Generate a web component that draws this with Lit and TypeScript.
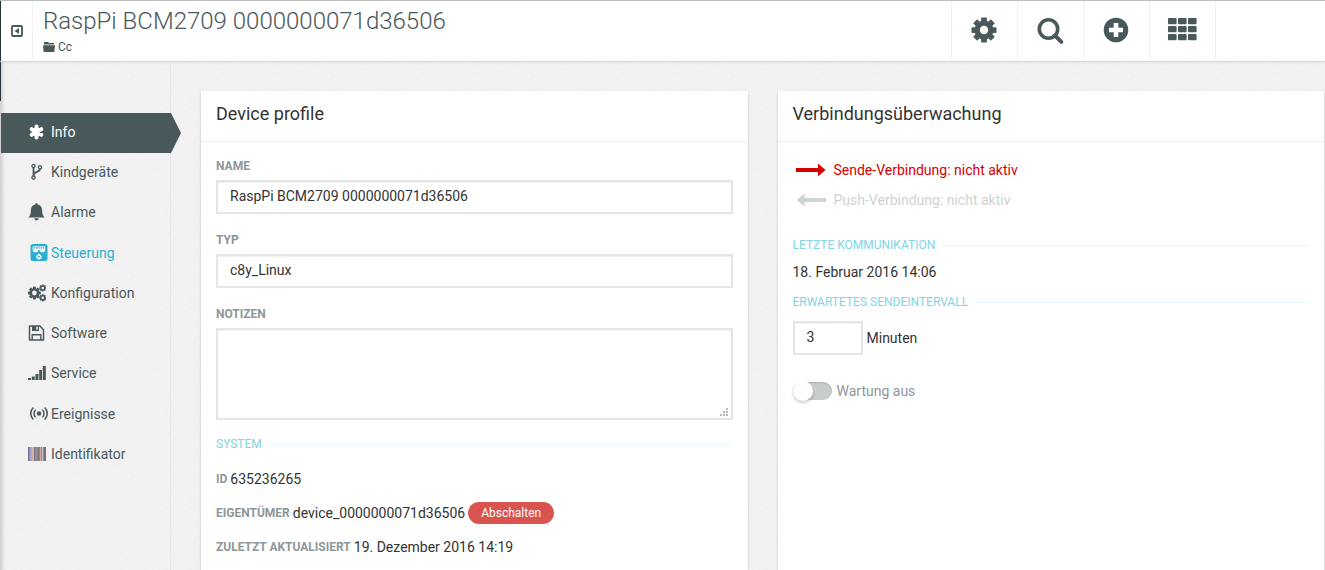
import { LitElement, html, css, svg, type SVGTemplateResult } from "lit";
import { customElement } from "lit/decorators.js";
import { classMap } from "lit/directives/class-map.js";

const gear = (cx: number, cy: number, r: number, hole: number): SVGTemplateResult => {
  const body = r * 0.76;
  const tooth = r * 0.46;
  return svg`
    <circle cx=${cx} cy=${cy} r=${(body + hole) / 2} fill="none" stroke="currentColor" stroke-width=${body - hole} />
    ${[0, 45, 90, 135, 180, 225, 270, 315].map(
      (a) => svg`<rect x=${cx - tooth / 2} y=${cy - r} width=${tooth} height=${r * 0.4} rx=${r * 0.06}
        transform="rotate(${a} ${cx} ${cy})" fill="currentColor" />`,
    )}`;
};

const icons: Record<string, SVGTemplateResult> = {
  info: svg`<g stroke="currentColor" stroke-width="4" stroke-linecap="round">
    <path d="M8.500 3.500v11M3.700 6.200l9.600 5.600M13.300 6.200l-9.600 5.600" /></g>`,
  children: svg`<g fill="none" stroke="currentColor" stroke-width="1.300">
    <circle cx="5.500" cy="3" r="1.600" /><circle cx="12" cy="4.200" r="1.600" /><circle cx="5.500" cy="14.600" r="1.600" />
    <path d="M5.500 4.700v8.200M12 5.900c0 3.500-6.300 2.500-6.300 6" stroke-width="1.800" /></g>`,
  alarms: svg`<path fill="currentColor" d="M8.500.3c.8 0 1.300.5 1.300 1.300 3 .7 4.200 2.800 4.300 5.600.1 3.700.9 5.400 2.600 7.300H.5c1.700-1.900 2.300-3.600 2.400-7.300.1-2.800 1.300-4.900 4.300-5.600C7.200.8 7.700.3 8.500.3zM6.200 15.200h4.600c-.2 1.400-1 2.100-2.300 2.100s-2.100-.7-2.300-2.100z" />`,
  control: svg`<rect x=".5" y="0" width="17" height="17" rx="2.500" fill="currentColor" />
    <path d="M3 2.200h12c.7 1.800.4 4.300-.6 6H3.600c-1-1.700-1.300-4.200-.6-6z" fill="#f1f1f1" />
    <path d="M4 3.900h10" stroke="currentColor" stroke-width="1.100" stroke-dasharray="1.300 .9" />
    <path d="M9 5.500l2.200 3.500H6.800z" fill="currentColor" /><path d="M9 9.200l2 2a2.600 2.600 0 1 1-4 0z" fill="#f1f1f1" />
    <circle cx="9" cy="12.600" r=".9" fill="currentColor" />`,
  config: svg`${gear(6.400, 9, 6.400, 2.400)}${gear(14.800, 4, 3.600, 1.300)}${gear(14.800, 13.800, 3.600, 1.300)}`,
  software: svg`<path d="M1.500 2h10.400l3.600 3.800V16h-14z" fill="none" stroke="currentColor" stroke-width="1.500" stroke-linejoin="round" />
    <path d="M4 2h7v5H4z" fill="currentColor" /><path d="M8.300 2.800h1.500v3H8.300z" fill="#f1f1f1" />
    <path d="M4.200 16v-5.300h8.600V16" fill="none" stroke="currentColor" stroke-width="1.400" />`,
  service: svg`<path fill="currentColor" d="M0 14h3v2H0zM3.800 12.500h3V16h-3zM7.500 10h3v6h-3zM11.200 6h2.800v10h-2.800zM14.800 2h3v14h-3z" />`,
  events: svg`<circle cx="9" cy="8.500" r="2.300" fill="currentColor" /><g fill="none" stroke="currentColor" stroke-width="1.500">
    <path d="M5.600 4.800a5 5 0 0 0 0 7.400M12.400 4.800a5 5 0 0 1 0 7.400M3.300 2.500a8.300 8.300 0 0 0 0 12M14.700 2.500a8.300 8.300 0 0 1 0 12" /></g>`,
  ident: svg`<rect y="2" width="18" height="14" fill="#8f8a93" /><path fill="#77727c" d="M0 2h1v14H0zM6 2h1v14H6zM10 2h1v14h-1zM16 2h2v14h-2z" />
    <path fill="#a9a5e0" d="M2 2h2v14H2z" /><path fill="#d3aaa4" d="M4 2h1v14H4zM12 2h1v14h-1z" /><path fill="#c4c1c8" d="M5 2h1v14H5zM14 2h1v14h-1z" />`,
};

const navItems = [
  { id: "info", label: "Info", active: true },
  { id: "children", label: "Kindgeräte" },
  { id: "alarms", label: "Alarme" },
  { id: "control", label: "Steuerung", hover: true, tall: true },
  { id: "config", label: "Konfiguration" },
  { id: "software", label: "Software" },
  { id: "service", label: "Service" },
  { id: "events", label: "Ereignisse", tall: true },
  { id: "ident", label: "Identifikator" },
];

const actions = [
  { label: "Einstellungen", icon: svg`${gear(15, 15, 12.500, 4.200)}` },
  {
    label: "Suche",
    icon: svg`<circle cx="13.500" cy="14" r="9.200" fill="none" stroke="currentColor" stroke-width="3.600" />
      <path d="M20 20.500l6.300 6.300" stroke="currentColor" stroke-width="4" stroke-linecap="round" />`,
  },
  {
    label: "Hinzufügen",
    icon: svg`<circle cx="15" cy="15" r="12.300" fill="currentColor" />
      <path d="M15 8v14M8 15h14" stroke="#fff" stroke-width="4.600" />`,
  },
  {
    label: "Anwendungen",
    icon: svg`${[3, 11, 19].map((y) =>
      [1, 11, 21].map((x) => svg`<rect x=${x} y=${y} width="8.600" height="6.200" rx="1" fill="currentColor" />`),
    )}`,
  },
];

@customElement("app-root")
export class AppRoot extends LitElement {
  static styles = css`
    :host {
      display: block;
      height: 100vh;
      overflow: hidden;
      box-sizing: border-box;
      border-top: 1px solid #bdbdbd;
      font: 14px/20px Roboto, "Open Sans", sans-serif;
      color: #333;
      background-color: #f4f4f4;
      background-image: url("data:image/svg+xml,%3Csvg xmlns='http://www.w3.org/2000/svg' width='200' height='200'%3E%3Cfilter id='n'%3E%3CfeTurbulence type='fractalNoise' baseFrequency='.5' numOctaves='2' stitchTiles='stitch'/%3E%3CfeColorMatrix values='0 0 0 0 .4 0 0 0 0 .4 0 0 0 0 .4 .12 0 0 0 -.03'/%3E%3C/filter%3E%3Crect width='200' height='200' filter='url(%23n)'/%3E%3C/svg%3E");
    }
    * { box-sizing: border-box; }
    svg { display: block; flex: none; }
    .topbar {
      display: flex;
      height: 61px;
      background: #fff;
      border-bottom: 1px solid #d9d9d9;
      color: #49585b;
      box-shadow: 0 1px 2px rgba(0, 0, 0, .06);
    }
    .collapse, .action {
      border: 0;
      padding: 0;
      background: none;
      color: inherit;
      display: flex;
      align-items: center;
      justify-content: center;
    }
    .collapse { width: 33px; border-left: 1px solid #263238; border-right: 1px solid #f1f1f1; }
    .heading { flex: 1; min-width: 0; padding: 4px 0 0 10px; }
    .title { margin: 0; font-size: 24px; line-height: 32px; font-weight: 300; white-space: nowrap; }
    .crumb { display: flex; align-items: center; gap: 3px; font-size: 12px; line-height: 20px; color: inherit; text-decoration: none; }
    .actions { display: flex; padding-right: 109px; }
    .action { width: 66px; padding: 0 2px 2px 0; border-left: 1px solid #f1f1f1; }
    .action:last-child { width: 67px; border-right: 1px solid #f1f1f1; }
    .layout { display: flex; height: calc(100vh - 62px); }
    .sidebar {
      width: 171px;
      flex: none;
      padding-top: 51px;
      border-right: 1px solid #e6e6e6;
      background:
        linear-gradient(#263238, #263238) 0 0 / 1px 39px no-repeat,
        linear-gradient(90deg, #cfcfcf, rgba(241, 241, 241, 0) 5px);
    }
    .list { list-style: none; margin: 0; padding: 0; }
    .link {
      display: flex;
      align-items: center;
      gap: 5px;
      height: 40px;
      padding: 0 0 2px 28px;
      color: #49585b;
      text-decoration: none;
    }
    .link.tall { height: 41px; padding-left: 30px; gap: 3px; }
    .link.hover { color: #28b0d0; }
    .link.active {
      color: #fff;
      background: #49585b;
      margin: 0 -11px 0 1px;
      padding-left: 27px;
      clip-path: polygon(0 0, calc(100% - 10px) 0, 100% 50%, calc(100% - 10px) 100%, 0 100%);
    }
    .content {
      flex: 1;
      min-width: 0;
      display: grid;
      grid-template-columns: 1fr 1fr;
      gap: 30px;
      padding: 29px 1px 0 30px;
    }
    .card { background: #fff; box-shadow: 0 1px 2px rgba(0, 0, 0, .25); }
    .card-title {
      margin: 0;
      padding: 8px 15px 12px;
      font-size: 18px;
      line-height: 30px;
      font-weight: 400;
      border-bottom: 1px solid #f0f0f0;
    }
    .body { padding: 14px 15px; }
    .field { display: flex; flex-direction: column; gap: 4px; }
    .field + .field { margin-top: 16px; }
    .label { font-size: 12px; font-weight: 700; color: #8d9799; text-transform: uppercase; }
    .input {
      height: 34px;
      width: 100%;
      margin: 0;
      padding: 0 12px 2px;
      border: 2px solid #e5e5e5;
      border-radius: 0;
      box-shadow: inset 0 1px 1px rgba(0, 0, 0, .06);
      background: #fff;
      font: inherit;
      color: inherit;
      outline: 0;
    }
    .notes { height: 92px; padding: 6px 12px; resize: vertical; }
    .notes::-webkit-resizer {
      background: url("data:image/svg+xml,%3Csvg xmlns='http://www.w3.org/2000/svg' width='15' height='15'%3E%3Cpath fill='%23bbb' d='M10 5h2v2h-2zM7 8h2v2H7zM10 8h2v2h-2zM4 11h2v2H4zM7 11h2v2H7zM10 11h2v2h-2z'/%3E%3C/svg%3E") no-repeat;
    }
    .legend {
      display: flex;
      align-items: center;
      gap: 7px;
      margin: 0;
      font-size: 12px;
      line-height: 20px;
      font-weight: 400;
      text-transform: uppercase;
      color: #7fd4e6;
    }
    .legend::after { content: ""; flex: 1; height: 1px; background: #e3f6fa; }
    .system { margin: 14px 0 8px; }
    .row { display: flex; align-items: center; gap: 3px; height: 34px; }
    .pill {
      height: 22px;
      padding: 0 13px;
      border: 0;
      border-radius: 11px;
      background: #d9534f;
      color: #fff;
      font: 12px/20px Roboto, sans-serif;
    }
    .status { display: flex; align-items: center; gap: 8px; height: 30px; padding: 0 0 2px 3px; }
    .send { color: #d60000; }
    .push { color: #ced3d4; }
    .last { margin: 19px 0 7px; }
    .date { margin: 0 0 10px; }
    .interval { display: flex; align-items: center; gap: 4px; margin: 9px 0 26px; }
    .minutes { width: 70px; }
    .maintenance { display: flex; align-items: center; gap: 5px; color: #8d9799; }
    .switch {
      appearance: none;
      width: 39px;
      height: 18px;
      margin: 0;
      border-radius: 9px;
      background: #c8cccc;
      box-shadow: inset 0 1px 2px rgba(0, 0, 0, .15);
      display: flex;
      align-items: center;
    }
    .switch::before {
      content: "";
      flex: none;
      width: 20px;
      height: 20px;
      border-radius: 50%;
      background: #fff;
      box-shadow: 0 2px 3px rgba(0, 0, 0, .2);
    }
  `;

  render() {
    return html`
      <header class="topbar">
        <button class="collapse" aria-label="Navigation einblenden">
          <svg width="12" height="12" viewBox="0 0 12 12">
            <rect x="1" y="1" width="10" height="10" rx="1" fill="none" stroke="currentColor" stroke-width="1.800" />
            <path d="M8 3v6L3.500 6z" fill="currentColor" />
          </svg>
        </button>
        <div class="heading">
          <h1 class="title">RaspPi BCM2709 0000000071d36506</h1>
          <a class="crumb" href="#group">
            <svg width="12" height="10" viewBox="0 0 12 10">
              <path d="M1 0h4l1 1h5v1.500H1zM0 3.300h12L11.300 10H.7z" fill="currentColor" />
            </svg>Cc</a>
        </div>
        <div class="actions">
          ${actions.map(
            (a) => html`<button class="action" aria-label=${a.label}>
              <svg width="30" height="30" viewBox="0 0 30 30">${a.icon}</svg>
            </button>`,
          )}
        </div>
      </header>
      <div class="layout">
        <nav class="sidebar">
          <ul class="list">
            ${navItems.map(
              (n) => html`<li>
                <a class=${classMap({ link: true, active: !!n.active, hover: !!n.hover, tall: !!n.tall })} href="#${n.id}">
                  <svg width="18" height="18" viewBox="0 0 18 18">${icons[n.id]}</svg>${n.label}</a>
              </li>`,
            )}
          </ul>
        </nav>
        <main class="content">
          <section class="card">
            <h2 class="card-title">Device profile</h2>
            <div class="body">
              <div class="field">
                <label class="label" for="name">Name</label>
                <input class="input" id="name" .value=${"RaspPi BCM2709 0000000071d36506"} />
              </div>
              <div class="field">
                <label class="label" for="type">Typ</label>
                <input class="input" id="type" .value=${"c8y_Linux"} />
              </div>
              <div class="field">
                <label class="label" for="notes">Notizen</label>
                <textarea class="input notes" id="notes"></textarea>
              </div>
              <h3 class="legend system">System</h3>
              <div class="row"><span class="label">ID</span><span>635236265</span></div>
              <div class="row">
                <span class="label">Eigentümer</span><span>device_0000000071d36506</span>
                <button class="pill">Abschalten</button>
              </div>
              <div class="row"><span class="label">Zuletzt aktualisiert</span><span>19. Dezember 2016 14:19</span></div>
            </div>
          </section>
          <section class="card">
            <h2 class="card-title">Verbindungsüberwachung</h2>
            <div class="body">
              <div class="status send">
                <svg width="30" height="14" viewBox="0 0 30 14"><path d="M0 5h22V.5L29.500 7 22 13.500V9H0z" fill="currentColor" /></svg>
                <span>Sende-Verbindung: nicht aktiv</span>
              </div>
              <div class="status push">
                <svg width="30" height="14" viewBox="0 0 30 14"><path d="M30 5H8.500V.5L1 7l7.500 6.500V9H30z" fill="currentColor" /></svg>
                <span>Push-Verbindung: nicht aktiv</span>
              </div>
              <h3 class="legend last">Letzte Kommunikation</h3>
              <p class="date">18. Februar 2016 14:06</p>
              <h3 class="legend">Erwartetes Sendeintervall</h3>
              <div class="interval">
                <input class="input minutes" id="minutes" .value=${"3"} />
                <label for="minutes">Minuten</label>
              </div>
              <div class="maintenance">
                <input class="switch" type="checkbox" role="switch" id="maintenance" />
                <label for="maintenance">Wartung aus</label>
              </div>
            </div>
          </section>
        </main>
      </div>
    `;
  }
}
